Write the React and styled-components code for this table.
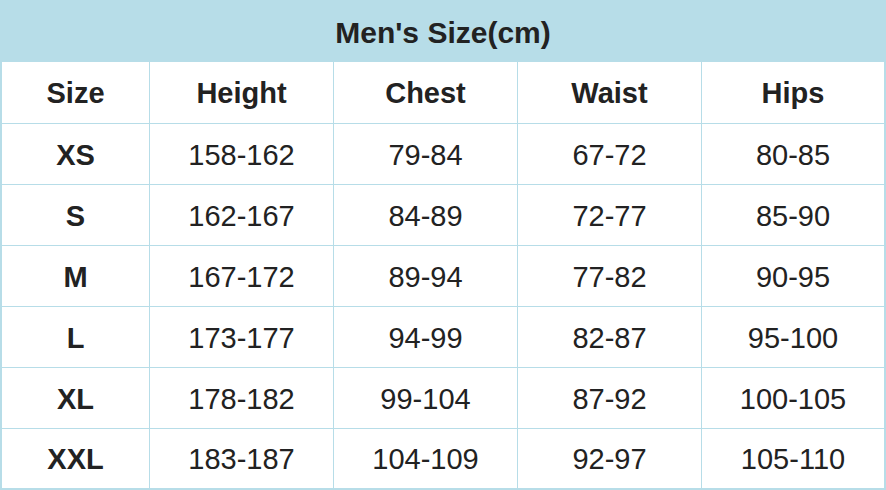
import React from "react";
import styled, { createGlobalStyle } from "styled-components";

const rows = [
  ["XS", "158-162", "79-84", "67-72", "80-85"],
  ["S", "162-167", "84-89", "72-77", "85-90"],
  ["M", "167-172", "89-94", "77-82", "90-95"],
  ["L", "173-177", "94-99", "82-87", "95-100"],
  ["XL", "178-182", "99-104", "87-92", "100-105"],
  ["XXL", "183-187", "104-109", "92-97", "105-110"],
];

const headings = ["Size", "Height", "Chest", "Waist", "Hips"];

const App = () => {
  return (
    <>
      <GlobalStyle />
      <Chart>
        <Title>Men's Size(cm)</Title>
        <Grid>
          {headings.map((h) => (
            <Cell key={h} bold>
              {h}
            </Cell>
          ))}
          {rows.map((row) =>
            row.map((value, i) => (
              <Cell key={row[0] + i} bold={i === 0}>
                {value}
              </Cell>
            ))
          )}
        </Grid>
      </Chart>
    </>
  );
};

export default App;

const GlobalStyle = createGlobalStyle`
  body {
    margin: 0;
    background: #ffffff;
    font-family: "Liberation Sans", Arial, sans-serif;
  }
`;

const Chart = styled.div`
  width: 886px;
  height: 490px;
  box-sizing: border-box;
  background: #b7dde8;
  padding: 0 2px 2px 2px;
  display: flex;
  flex-direction: column;
  gap: 1px;
`;

const Title = styled.div`
  height: 61px;
  display: flex;
  align-items: center;
  justify-content: center;
  font-size: 30px;
  font-weight: bold;
  color: #222222;
  padding-top: 4px;
  box-sizing: border-box;
`;

const Grid = styled.div`
  display: grid;
  grid-template-columns: 147px repeat(3, 183px) 182px;
  grid-template-rows: 61px repeat(5, 60px) 59px;
  gap: 1px;
`;

const Cell = styled.div`
  background: #ffffff;
  display: flex;
  align-items: center;
  justify-content: center;
  font-size: 29px;
  font-weight: ${({ bold }) => (bold ? "bold" : "normal")};
  color: #222222;
  padding-top: 2px;
  box-sizing: border-box;
`;
